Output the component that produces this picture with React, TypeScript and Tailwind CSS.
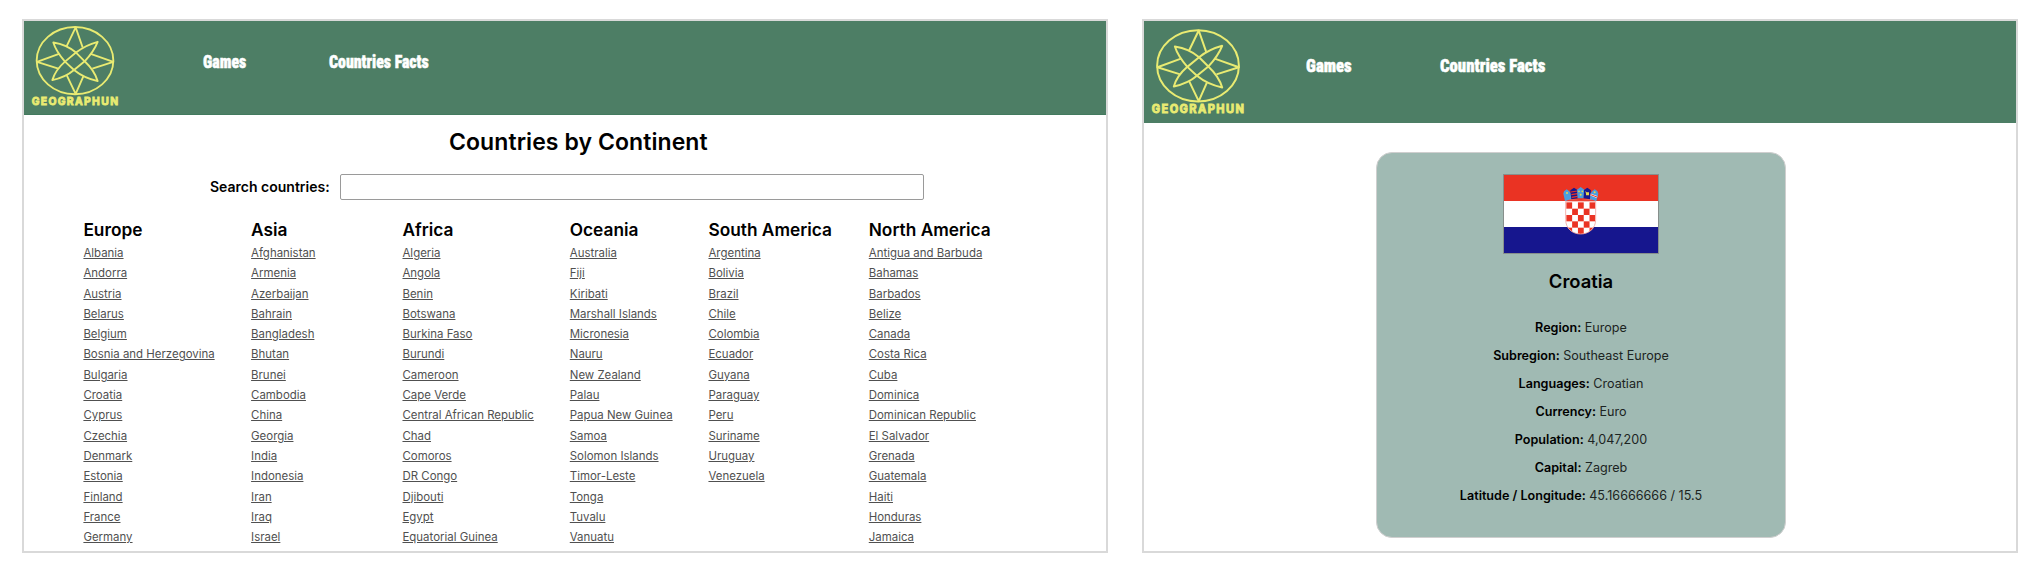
import type { ReactNode } from "react";

const continents: { name: string; countries: string[] }[] = [
  {
    name: "Europe",
    countries: ["Albania", "Andorra", "Austria", "Belarus", "Belgium", "Bosnia and Herzegovina", "Bulgaria", "Croatia", "Cyprus", "Czechia", "Denmark", "Estonia", "Finland", "France", "Germany"],
  },
  {
    name: "Asia",
    countries: ["Afghanistan", "Armenia", "Azerbaijan", "Bahrain", "Bangladesh", "Bhutan", "Brunei", "Cambodia", "China", "Georgia", "India", "Indonesia", "Iran", "Iraq", "Israel"],
  },
  {
    name: "Africa",
    countries: ["Algeria", "Angola", "Benin", "Botswana", "Burkina Faso", "Burundi", "Cameroon", "Cape Verde", "Central African Republic", "Chad", "Comoros", "DR Congo", "Djibouti", "Egypt", "Equatorial Guinea"],
  },
  {
    name: "Oceania",
    countries: ["Australia", "Fiji", "Kiribati", "Marshall Islands", "Micronesia", "Nauru", "New Zealand", "Palau", "Papua New Guinea", "Samoa", "Solomon Islands", "Timor-Leste", "Tonga", "Tuvalu", "Vanuatu"],
  },
  {
    name: "South America",
    countries: ["Argentina", "Bolivia", "Brazil", "Chile", "Colombia", "Ecuador", "Guyana", "Paraguay", "Peru", "Suriname", "Uruguay", "Venezuela"],
  },
  {
    name: "North America",
    countries: ["Antigua and Barbuda", "Bahamas", "Barbados", "Belize", "Canada", "Costa Rica", "Cuba", "Dominica", "Dominican Republic", "El Salvador", "Grenada", "Guatemala", "Haiti", "Honduras", "Jamaica"],
  },
];

const facts: [string, string][] = [
  ["Region", "Europe"],
  ["Subregion", "Southeast Europe"],
  ["Languages", "Croatian"],
  ["Currency", "Euro"],
  ["Population", "4,047,200"],
  ["Capital", "Zagreb"],
  ["Latitude / Longitude", "45.16666666 / 15.5"],
];

function Logo({ className }: { className: string }) {
  return (
    <svg className={className} viewBox="90 76 270 244" preserveAspectRatio="none" overflow="visible" role="img">
      <g fill="none" stroke="#e9eb72" strokeWidth="5.6" strokeLinejoin="round">
        <ellipse cx="225" cy="182" rx="115" ry="100" />
        <path d="M200 139 L227 83 L248 143" />
        <path d="M177 162 L111 186 L175 206" />
        <path d="M272 162 L340 186 L277 206" />
        <path d="M200 225 L227 281 L250 229" />
        <path d="M160 128 Q200 134 228 158 L254 184 Q284 212 293 243 Q252 234 222 210 L195 185 Q168 154 160 128 Z" />
        <path d="M293 126 Q256 136 228 158 L195 185 Q166 210 157 240 Q196 232 222 210 L254 184 Q282 154 293 126 Z" />
      </g>
      <text
        x="95"
        y="315"
        textLength="259"
        lengthAdjust="spacing"
        className="fill-[#e9eb72] stroke-[#e9eb72] font-['Inter',sans-serif] text-[31px] font-bold"
        strokeWidth="2.5"
      >
        GEOGRAPHUN
      </text>
    </svg>
  );
}

function Shield() {
  const cells: ReactNode[] = [];
  for (let row = 0; row < 5; row++) {
    for (let col = 0; col < 5; col++) {
      if ((row + col) % 2 === 0) {
        cells.push(<rect key={`${row}-${col}`} x={10 + col * 17.4} y={46 + row * 19} width="17.4" height="19" fill="#ea3323" />);
      }
    }
  }
  return (
    <svg className="absolute left-[59px] top-[12px] h-[50px] w-[36px]" viewBox="0 0 108 150">
      <defs>
        <clipPath id="shield">
          <path d="M8 40 Q53 32 98 40 V98 C98 124 78 141 53 141 C28 141 8 124 8 98 Z" />
        </clipPath>
      </defs>
      <path d="M8 40 Q53 32 98 40 V98 C98 124 78 141 53 141 C28 141 8 124 8 98 Z" fill="#fff" />
      <g clipPath="url(#shield)">
        <rect x="8" y="34" width="90" height="8" fill="#ea3323" />
        {cells}
      </g>
      <path d="M8 43 V98 C8 124 28 141 53 141 C78 141 98 124 98 98 V43 Z" fill="none" stroke="#f3a39d" strokeWidth="2.5" />
      <path d="M6 42 L1 20 L3 13 L11 7 L19 13 L23 19 L25 36 Z" fill="#4a9de0" />
      <path d="M25 37 L22 10 L33 2 L43 9 L44 34 Z" fill="#16168e" />
      <path d="M24 15 L43 12 M25 23 L44 20 M26 31 L44 28" stroke="#ea3323" strokeWidth="3.5" />
      <path d="M44 34 L42 8 L53 0 L64 8 L62 34 Z" fill="#4a9de0" />
      <path d="M62 34 L63 9 L73 2 L84 10 L81 37 Z" fill="#16168e" />
      <path d="M81 36 L83 19 L88 12 L95 7 L103 12 L106 20 L100 42 Z" fill="#4a9de0" />
      <path d="M83 23 L102 30" stroke="#fff" strokeWidth="6" />
      <path d="M83 23 L102 30" stroke="#ea3323" strokeWidth="3" />
      <g fill="#e8d84a">
        <circle cx="12" cy="18" r="3" />
        <circle cx="48" cy="13" r="2.6" />
        <circle cx="58" cy="13" r="2.6" />
        <circle cx="53" cy="23" r="3" />
        <circle cx="95" cy="16" r="3" />
        <path d="M67 12 L71 16 H78 V25 H69 V20 Z" />
      </g>
    </svg>
  );
}

export default function App() {
  return (
    <div className="flex h-[574px] w-[2040px] gap-[34px] overflow-hidden bg-white pl-[22px] pt-[19px] font-['Inter',sans-serif] text-black">
      <section className="flex h-[534px] w-[1086px] flex-col overflow-hidden border-2 border-[#d9d9d9] bg-white">
        <header className="flex h-[94px] shrink-0 border-b border-[#427a5e] bg-[#4d7e65]">
          <Logo className="ml-[6px] mt-[4px] h-[82px] w-[90px] shrink-0" />
          <nav className="flex pl-[82.5px] pt-[29.5px] font-['Roboto',sans-serif] text-[18px] leading-[22px] font-black whitespace-nowrap text-white [-webkit-text-stroke:0.5px_white] [font-stretch:75%]">
            <a className="w-[126px] origin-left scale-x-[0.88]">Games</a>
            <a className="origin-left scale-x-[0.88]">Countries Facts</a>
          </nav>
        </header>
        <h1 className="mt-[11px] pl-[425px] text-[23px] leading-[32px] font-semibold tracking-[0.08px]">Countries by Continent</h1>
        <div className="mt-[16px] flex h-[26px] items-center pl-[186px]">
          <label htmlFor="search" className="w-[130px] text-[14px] leading-5 font-semibold">Search countries:</label>
          <input id="search" className="h-[26px] w-[583.5px] rounded-[2px] border border-[#9a9a9a] bg-white" />
        </div>
        <div className="mt-[17.5px] grid grid-cols-[167.7px_151.4px_167.3px_138.7px_160.3px_auto] pl-[59.4px]">
          {continents.map((c) => (
            <div key={c.name} className="whitespace-nowrap">
              <h2 className="text-[17.3px] leading-[24px] font-semibold">{c.name}</h2>
              <ul className="mt-[1.5px]">
                {c.countries.map((n) => (
                  <li key={n} className="h-[20.3px] text-[11.45px] leading-[20.3px] text-[#505050]">
                    <a className="underline">{n}</a>
                  </li>
                ))}
              </ul>
            </div>
          ))}
        </div>
      </section>

      <section className="flex h-[534px] w-[876px] flex-col overflow-hidden border-2 border-[#d9d9d9] bg-white">
        <header className="flex h-[102px] shrink-0 bg-[#4d7e65]">
          <Logo className="ml-[6px] mt-[7px] h-[87px] w-[96px] shrink-0" />
          <nav className="flex pl-[59.5px] pt-[34px] font-['Roboto',sans-serif] text-[19px] leading-[22px] font-black whitespace-nowrap text-white [-webkit-text-stroke:0.5px_white] [font-stretch:75%]">
            <a className="w-[134px] origin-left scale-x-[0.88]">Games</a>
            <a className="origin-left scale-x-[0.88]">Countries Facts</a>
          </nav>
        </header>
        <article className="ml-[232px] mt-[29px] flex h-[386px] w-[410px] flex-col items-center rounded-[16px] border border-[#cfcfcf] bg-[#a0bab3]">
          <div className="relative mt-[21px] flex h-[80px] w-[156px] flex-col border border-[#878f8c]">
            <div className="flex-1 bg-[#ea3323]" />
            <div className="flex-1 bg-white" />
            <div className="flex-1 bg-[#16168e]" />
            <Shield />
          </div>
          <h2 className="mt-[15px] text-[18.4px] leading-[24px] font-semibold">Croatia</h2>
          <dl className="mt-[21px] text-center text-[12.6px] leading-[28px]">
            {facts.map(([k, v]) => (
              <div key={k} className="h-[28px]">
                <dt className="inline font-semibold">{k}:</dt> <dd className="inline text-[#1c2422]">{v}</dd>
              </div>
            ))}
          </dl>
        </article>
      </section>
    </div>
  );
}
